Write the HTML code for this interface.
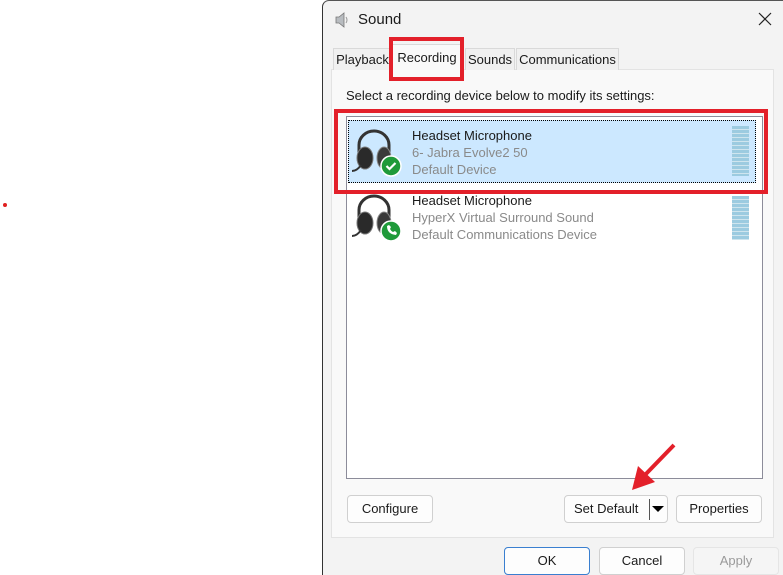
<!DOCTYPE html><html><head><style>
*{box-sizing:border-box;margin:0;padding:0}
body{width:783px;height:575px;background:#fff;position:relative;overflow:hidden;font-family:"Liberation Sans",sans-serif;font-size:13px;color:#1a1a1a}
.a{position:absolute}
.btn{position:absolute;background:#fdfdfd;border:1px solid #d0d0d0;border-radius:4px;text-align:center;line-height:26px;font-size:13px}
.tab{position:absolute;top:48px;height:22px;border:1px solid #d9d9d9;border-bottom:none;background:#f0f0f0;text-align:center;line-height:22px;font-size:13px}
.t1{font-size:13px;color:#1a1a1a}
.t2{font-size:13px;color:#8a8a8a}
.lv{position:absolute;width:17px;background:repeating-linear-gradient(#9ccbe0 0 3px,#cfe5ee 3px 4px)}
</style></head><body>
<div class="a" style="left:3px;top:203px;width:4px;height:4px;background:#e02020;border-radius:2px"></div>
<div class="a" style="left:322px;top:0;width:461px;height:575px;background:#f3f3f3;border-left:1px solid #333;border-top:1px solid #555;border-top-left-radius:7px"></div>
<svg class="a" style="left:333px;top:11px" width="18" height="18" viewBox="0 0 18 18"><path d="M3 6h3l5-4v14l-5-4H3z" fill="#b8bcc0" stroke="#777" stroke-width=".8"/><path d="M13 6q2 3 0 6" stroke="#999" fill="none"/></svg>
<div class="a" style="left:358px;top:11px;font-size:15px">Sound</div>
<svg class="a" style="left:758px;top:12px" width="14" height="14"><path d="M1 1L13 13M13 1L1 13" stroke="#222" stroke-width="1.2"/></svg>
<div class="a" style="left:331px;top:69px;width:443px;height:469px;background:#f9f9f9;border:1px solid #e3e3e3"></div>
<div class="tab" style="left:333px;width:59px">Playback</div>
<div class="tab" style="left:392px;width:70px;top:44px;height:26px;background:#f9f9f9;line-height:26px">Recording</div>
<div class="tab" style="left:465px;width:50px">Sounds</div>
<div class="tab" style="left:516px;width:103px">Communications</div>
<div class="a" style="left:389px;top:37px;width:75px;height:44px;border:4px solid #e3202a"></div>
<div class="a" style="left:346px;top:88px">Select a recording device below to modify its settings:</div>
<div class="a" style="left:346px;top:116px;width:417px;height:363px;background:#fff;border:1px solid #8c8c9a"></div>
<div class="a" style="left:348px;top:120px;width:408px;height:63px;background:#cce8ff;border:1px dotted #000"></div>
<div class="lv" style="left:732px;top:126px;height:50px"></div>
<div class="lv" style="left:732px;top:196px;height:44px"></div>
<svg class="a" style="left:351px;top:127px" width="52" height="50" viewBox="0 0 52 50"><path d="M8 28V18a15 14 0 0 1 30 0v10" stroke="#333" stroke-width="3" fill="none"/><ellipse cx="14" cy="31" rx="8" ry="11" fill="#2a2a2a" stroke="#777"/><ellipse cx="33" cy="31" rx="7" ry="11" fill="#3a3a3a" stroke="#888"/><path d="M10 38q-4 6-9 6" stroke="#333" stroke-width="2" fill="none"/><circle cx="40" cy="39" r="10" fill="#1f9a3a" stroke="#fff" stroke-width="1.5"/><path d="M35.5 39l3 3 6-6" stroke="#fff" stroke-width="2.2" fill="none"/></svg>
<svg class="a" style="left:351px;top:192px" width="52" height="50" viewBox="0 0 52 50"><path d="M8 28V18a15 14 0 0 1 30 0v10" stroke="#333" stroke-width="3" fill="none"/><ellipse cx="14" cy="31" rx="8" ry="11" fill="#2a2a2a" stroke="#777"/><ellipse cx="33" cy="31" rx="7" ry="11" fill="#3a3a3a" stroke="#888"/><path d="M10 38q-4 6-9 6" stroke="#333" stroke-width="2" fill="none"/><circle cx="40" cy="39" r="10" fill="#1f9a3a" stroke="#fff" stroke-width="1.5"/><path d="M36 34q0 8 9 9l1-2-2-2-2 1q-2-1-3-3l1-2-2-2z" fill="#fff"/></svg>
<div class="a t1" style="left:412px;top:128px">Headset Microphone</div>
<div class="a t2" style="left:412px;top:145px">6- Jabra Evolve2 50</div>
<div class="a t2" style="left:412px;top:162px">Default Device</div>
<div class="a t1" style="left:412px;top:193px">Headset Microphone</div>
<div class="a t2" style="left:412px;top:210px">HyperX Virtual Surround Sound</div>
<div class="a t2" style="left:412px;top:227px">Default Communications Device</div>
<div class="a" style="left:334px;top:109px;width:434px;height:85px;border:4px solid #e3202a"></div>
<div class="btn" style="left:347px;top:495px;width:86px;height:28px">Configure</div>
<div class="btn" style="left:564px;top:495px;width:104px;height:28px;text-align:left;padding-left:9px">Set Default</div>
<div class="a" style="left:649px;top:499px;width:1px;height:21px;background:#555"></div>
<svg class="a" style="left:651px;top:505px" width="14" height="8"><path d="M1 1h12L7 7z" fill="#000"/></svg>
<div class="btn" style="left:676px;top:495px;width:86px;height:28px">Properties</div>
<div class="btn" style="left:504px;top:547px;width:86px;height:28px;border-color:#3a7fd0">OK</div>
<div class="btn" style="left:599px;top:547px;width:86px;height:28px">Cancel</div>
<div class="btn" style="left:693px;top:547px;width:86px;height:28px;color:#9a9a9a;background:#f5f5f5;border-color:#e5e5e5">Apply</div>
<svg class="a" style="left:625px;top:440px" width="55" height="60"><path d="M49 5L18 37" stroke="#e3202a" stroke-width="4"/><path d="M7 50l6-24 17 16z" fill="#e3202a"/></svg>
</body></html>
